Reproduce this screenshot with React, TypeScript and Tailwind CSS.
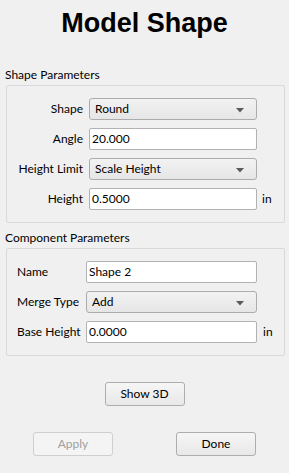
const font = { fontFamily: 'Lato, "Noto Sans", sans-serif' };

const Caret = () => (
  <svg width="8" height="5" viewBox="0 0 8 5" className="absolute right-[12px] top-[9px]">
    <path d="M0 0 H8 L4 4.5 Z" fill="#5a5a5a" />
  </svg>
);

const Select = ({ value, w }: { value: string; w: string }) => (
  <div
    className={`relative h-[22px] ${w} rounded-[3px] border border-[#acacac] bg-gradient-to-b from-[#f2f2f2] to-[#e6e6e6] pl-[5px] text-[12px] leading-[20px] text-black`}
  >
    {value}
    <Caret />
  </div>
);

const Field = ({ value, w }: { value: string; w: string }) => (
  <div
    className={`h-[22px] ${w} rounded-[2px] border border-[#b2b2b2] bg-white pl-[2px] text-[12px] leading-[20px] text-black`}
  >
    {value}
  </div>
);

const Button = ({ label, disabled }: { label: string; disabled?: boolean }) => (
  <div
    className={`flex h-[24px] w-[80px] items-center justify-center rounded-[3px] border text-[12px] ${
      disabled
        ? "border-[#cfcfcf] bg-[#f4f4f4] text-[#a0a0a0]"
        : "border-[#adadad] bg-gradient-to-b from-[#f6f6f6] to-[#e8e8e8] text-black"
    }`}
  >
    {label}
  </div>
);

export default function App() {
  return (
    <div className="flex h-[473px] w-[289px] flex-col bg-[#f0f0f0] text-black" style={font}>
      <div
        className="mt-[8px] h-[31px] text-center text-[27px] font-bold leading-[31px]"
        style={{ fontFamily: '"Liberation Sans", Arial, sans-serif' }}
      >
        Model Shape
      </div>

      <div className="ml-[5px] mt-[28px] h-[16px] text-[12px] leading-[16px]">Shape Parameters</div>
      <div className="ml-[6px] mt-[2px] flex w-[279px] flex-col gap-[8px] rounded-[2px] border border-[#d9d9d9] pb-[12px] pt-[12px]">
        <div className="flex items-center">
          <span className="w-[76px] text-right text-[12px]">Shape</span>
          <div className="ml-[6px]"><Select value="Round" w="w-[168px]" /></div>
        </div>
        <div className="flex items-center">
          <span className="w-[76px] text-right text-[12px]">Angle</span>
          <div className="ml-[6px]"><Field value="20.000" w="w-[168px]" /></div>
        </div>
        <div className="flex items-center">
          <span className="w-[76px] text-right text-[12px]">Height Limit</span>
          <div className="ml-[6px]"><Select value="Scale Height" w="w-[168px]" /></div>
        </div>
        <div className="flex items-center">
          <span className="w-[76px] text-right text-[12px]">Height</span>
          <div className="ml-[6px]"><Field value="0.5000" w="w-[168px]" /></div>
          <span className="ml-[5px] text-[12px]">in</span>
        </div>
      </div>

      <div className="ml-[5px] mt-[7px] h-[16px] text-[12px] leading-[16px]">Component Parameters</div>
      <div className="ml-[6px] mt-[2px] flex w-[279px] flex-col gap-[8px] rounded-[2px] border border-[#d9d9d9] pb-[12px] pl-[10px] pt-[12px]">
        <div className="flex items-center">
          <span className="w-[69px] text-[12px]">Name</span>
          <Field value="Shape 2" w="w-[171px]" />
        </div>
        <div className="flex items-center">
          <span className="w-[69px] text-[12px]">Merge Type</span>
          <Select value="Add" w="w-[171px]" />
        </div>
        <div className="flex items-center">
          <span className="w-[69px] text-[12px]">Base Height</span>
          <Field value="0.0000" w="w-[171px]" />
          <span className="ml-[6px] text-[12px]">in</span>
        </div>
      </div>

      <div className="mt-[26px] flex justify-center">
        <Button label="Show 3D" />
      </div>
      <div className="mt-[26px] flex">
        <div className="ml-[33px]"><Button label="Apply" disabled /></div>
        <div className="ml-[63px]"><Button label="Done" /></div>
      </div>
    </div>
  );
}
